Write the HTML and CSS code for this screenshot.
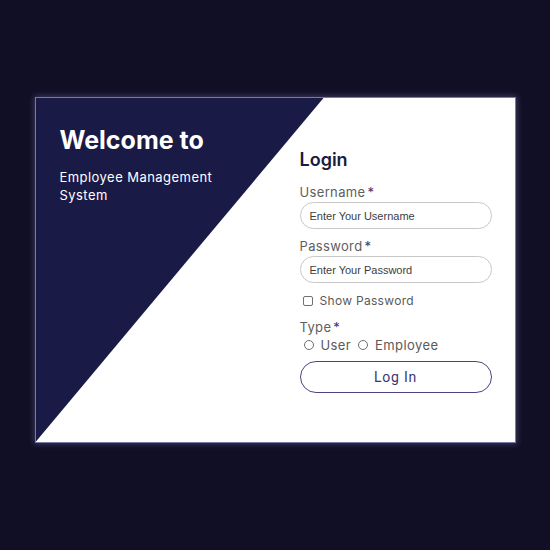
FILE: index.html
```html
<!DOCTYPE html>
<html>
<head>
<meta charset="utf-8">
<link rel="stylesheet" href="styles.css">
</head>
<body>
<div class="card">
  <div class="intro">
    <h1 class="welcome">Welcome to</h1>
    <p class="subtitle">Employee Management<br>System</p>
  </div>
  <form class="login">
    <h2 class="login-title">Login</h2>
    <label class="label">Username<span class="req">*</span></label>
    <input class="field" type="text" placeholder="Enter Your Username">
    <label class="label">Password<span class="req">*</span></label>
    <input class="field" type="password" placeholder="Enter Your Password">
    <label class="check-row"><span class="box"></span>Show Password</label>
    <label class="label type-label">Type<span class="req">*</span></label>
    <div class="radio-row">
      <span class="radio"></span><span class="radio-text">User</span>
      <span class="radio"></span><span class="radio-text">Employee</span>
    </div>
    <button class="btn" type="button">Log In</button>
  </form>
</div>
</body>
</html>
```

FILE: styles.css
```css
html, body {
  margin: 0;
  padding: 0;
  background: #110f26;
  height: 100%;
}
body {
  display: flex;
  justify-content: center;
  align-items: flex-start;
  padding-top: 97px;
  box-sizing: border-box;
  font-family: Inter, "Open Sans", sans-serif;
}
.card {
  position: relative;
  width: 479px;
  height: 344px;
  background: #ffffff;
  border: 1px solid #7c78a6;
  box-shadow: 0 0 6px 1px rgba(150, 140, 210, 0.35);
  display: grid;
  grid-template-columns: 240px 1fr;
  overflow: hidden;
}
.card::before {
  content: "";
  position: absolute;
  inset: 0;
  background: #1a1a46;
  clip-path: polygon(0 0, 288px 0, 0 100%);
}
.intro {
  position: relative;
  padding: 26px 0 0 24px;
  color: #ffffff;
}
.welcome {
  margin: 0;
  font-size: 25px;
  font-weight: 700;
  letter-spacing: 0px;
  line-height: 32px;
}
.subtitle {
  margin: 12px 0 0;
  font-size: 13px;
  line-height: 18px;
  font-weight: 400;
  letter-spacing: 0.45px;
}
.login {
  position: relative;
  display: flex;
  flex-direction: column;
  padding: 49px 23px 0 24px;
}
.login-title {
  margin: 0 0 10px;
  font-size: 18px;
  font-weight: 600;
  color: #1b1b3d;
  line-height: 26px;
}
.label {
  font-size: 13px;
  color: #5e5e5e;
  line-height: 18px;
  margin-bottom: 1px;
  letter-spacing: 0.35px;
}
.req {
  color: #3b3670;
  margin-left: 2px;
}
.field {
  box-sizing: border-box;
  height: 27px;
  width: 100%;
  border: 1px solid #c8c8c8;
  border-radius: 14px;
  padding: 0 9px;
  font-family: "Liberation Sans", Arial, sans-serif;
  font-size: 11px;
  margin: 0 0 8px;
  outline: none;
}
.field::placeholder {
  color: #3d3d3d;
}
.check-row {
  display: flex;
  align-items: center;
  gap: 7px;
  font-size: 12px;
  color: #5a5a5a;
  line-height: 16px;
  padding-left: 3px;
  margin-top: 2px;
  letter-spacing: 0.3px;
}
.box {
  width: 8px;
  height: 8px;
  border: 1px solid #707070;
  border-radius: 2px;
}
.type-label {
  margin-top: 9px;
  margin-bottom: 0;
}
.radio-row {
  display: flex;
  align-items: center;
  font-size: 13px;
  color: #5a5a5a;
  line-height: 18px;
  padding-left: 4px;
  letter-spacing: 0.4px;
}
.radio {
  width: 8px;
  height: 8px;
  border: 1px solid #707070;
  border-radius: 50%;
  margin-right: 7px;
}
.radio-text {
  margin-right: 7px;
}
.btn {
  margin-top: 7px;
  height: 32px;
  width: 100%;
  border: 1px solid #4a4580;
  border-radius: 16px;
  background: #ffffff;
  color: #3b3670;
  font-family: Roboto, Arial, sans-serif;
  font-size: 14px;
  letter-spacing: 0.8px;
}
```
